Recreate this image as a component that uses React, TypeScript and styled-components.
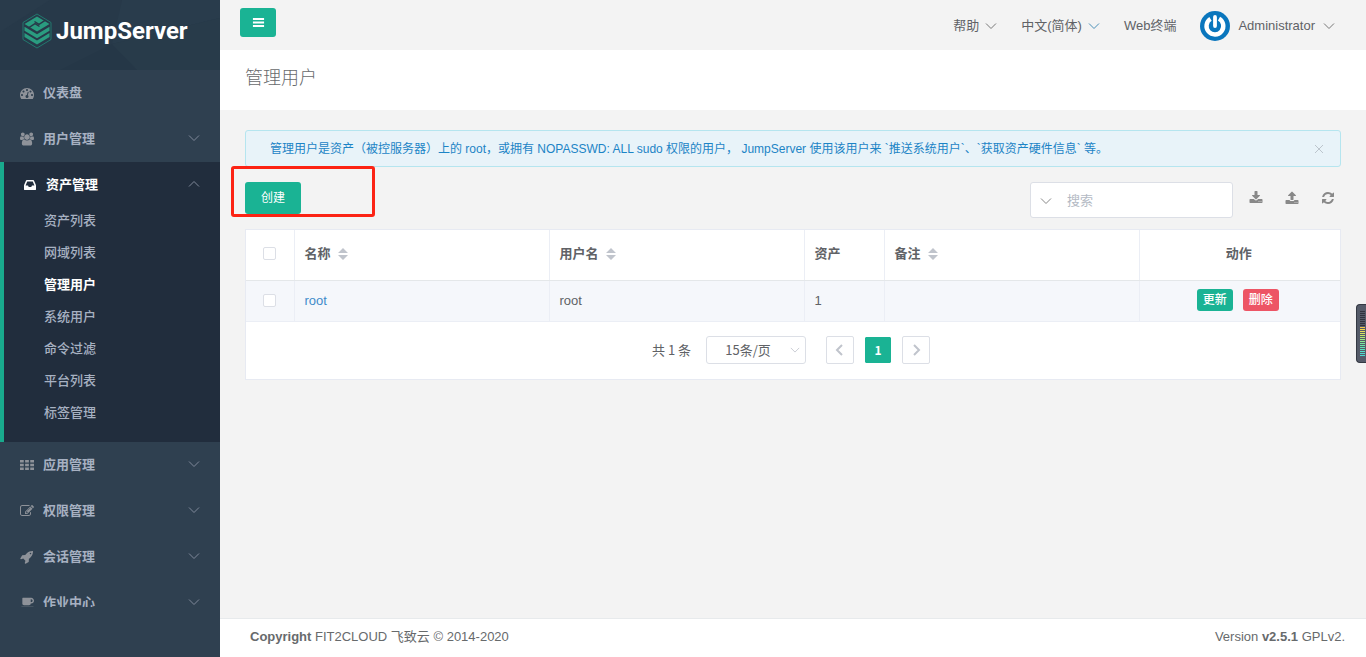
import React from 'react';
import styled, { createGlobalStyle, css } from 'styled-components';

const GREEN = '#1ab394';

const Global = createGlobalStyle`
  *, *::before, *::after { box-sizing: border-box; }
  body {
    margin: 0;
    background: #f3f3f3;
    color: #606266;
    font-family: "Liberation Sans", "Noto Sans CJK SC", sans-serif;
    font-size: 13px;
    line-height: 20px;
  }
  button, input, select { font: inherit; color: inherit; }
  button { cursor: pointer; }
  a { text-decoration: none; color: inherit; }
  ul { list-style: none; margin: 0; padding: 0; }
`;

/* ---------- icons ---------- */

const PATHS = {
  dashboard:
    'M384 1152q0-53-37.5-90.5t-90.5-37.5-90.5 37.5-37.5 90.5 37.5 90.5 90.5 37.5 90.5-37.5 37.5-90.5zm192-448q0-53-37.5-90.5t-90.5-37.5-90.5 37.5-37.5 90.5 37.5 90.5 90.5 37.5 90.5-37.5 37.5-90.5zm428 481l101-382q6-26-7.5-48.5t-38.5-29.5-48 6.5-30 39.5l-101 382q-60 5-107 43.5t-63 98.5q-20 77 20 146t117 89 146-20 89-117q16-60-6-117t-72-91zm660-33q0-53-37.5-90.5t-90.5-37.5-90.5 37.5-37.5 90.5 37.5 90.5 90.5 37.5 90.5-37.5 37.5-90.5zm-640-640q0-53-37.5-90.5t-90.5-37.5-90.5 37.5-37.5 90.5 37.5 90.5 90.5 37.5 90.5-37.5 37.5-90.5zm448 192q0-53-37.5-90.5t-90.5-37.5-90.5 37.5-37.5 90.5 37.5 90.5 90.5 37.5 90.5-37.5 37.5-90.5zm320 448q0 261-141 483-19 29-54 29h-1402q-35 0-54-29-141-221-141-483 0-182 71-348t191-286 286-191 348-71 348 71 286 191 191 286 71 348z',
  users:
    'M529 896q-162 5-265 128h-134q-82 0-138-40.5t-56-118.5q0-353 124-353 6 0 43.5 21t97.5 42.5 119 21.5q67 0 133-23-5 37-5 66 0 139 81 256zm1071 637q0 120-73 189.5t-194 69.5h-874q-121 0-194-69.5t-73-189.5q0-53 3.5-103.5t14-109 26.5-108.5 43-97.5 62-81 85.5-53.5 111.5-20q10 0 43 21.5t73 48 107 48 135 21.5 135-21.5 107-48 73-48 43-21.5q61 0 111.5 20t85.5 53.5 62 81 43 97.5 26.5 108.5 14 109 3.5 103.5zm-1024-1277q0 106-75 181t-181 75-181-75-75-181 75-181 181-75 181 75 75 181zm704 384q0 159-112.5 271.5t-271.5 112.5-271.5-112.5-112.5-271.5 112.5-271.5 271.5-112.5 271.5 112.5 112.5 271.5zm576 225q0 78-56 118.5t-138 40.5h-134q-103-123-265-128 81-117 81-256 0-29-5-66 66 23 133 23 59 0 119-21.5t97.5-42.5 43.5-21q124 0 124 353zm-128-609q0 106-75 181t-181 75-181-75-75-181 75-181 181-75 181 75 75 181z',
  inbox:
    'M1151 960h316q-1-3-2.5-8t-2.5-8l-212-496h-708l-212 496q-1 2-2.5 8t-2.5 8h316l95 192h320zm513 30v482q0 26-19 45t-45 19h-1408q-26 0-45-19t-19-45v-482q0-62 25-123l238-552q10-25 36.5-42t52.5-17h832q26 0 52.5 17t36.5 42l238 552q25 61 25 123z',
  grid:
    'M0 256h480v320h-480zM656 256h480v320h-480zM1312 256h480v320h-480zM0 736h480v320h-480zM656 736h480v320h-480zM1312 736h480v320h-480zM0 1216h480v320h-480zM656 1216h480v320h-480zM1312 1216h480v320h-480z',
  edit:
    'M888 1184l116-116-152-152-116 116v56h96v96h56zm440-720q-16-16-33 1l-350 350q-17 17-1 33t33-1l350-350q17-17 1-33zm80 594v190q0 119-84.5 203.5t-203.5 84.5h-832q-119 0-203.5-84.5t-84.5-203.5v-832q0-119 84.5-203.5t203.5-84.5h832q63 0 117 25 15 7 18 23 3 17-9 29l-49 49q-14 14-32 8-23-6-45-6h-832q-66 0-113 47t-47 113v832q0 66 47 113t113 47h832q66 0 113-47t47-113v-126q0-13 9-22l64-64q15-15 35-7t20 29zm-96-738l288 288-672 672h-288v-288zm444 132l-92 92-288-288 92-92q28-28 68-28t68 28l152 152q28 28 28 68t-28 68z',
  rocket:
    'M1440 448q0-40-28-68t-68-28-68 28-28 68 28 68 68 28 68-28 28-68zm224-288q0 249-75.5 430.5t-253.5 360.5q-81 80-195 176l-20 379q-2 16-16 26l-384 224q-7 4-16 4-12 0-23-9l-64-64q-13-14-8-32l85-276-281-281-276 85q-3 1-9 1-14 0-23-9l-64-64q-17-19-5-39l224-384q10-14 26-16l379-20q96-114 176-195 188-187 358-258t431-71q14 0 24 9.5t10 22.5z',
  coffee:
    'M1664 576q0-80-56-136t-136-56h-64v384h64q80 0 136-56t56-136zM128 1408h1664q0 106-75 181t-181 75h-1152q-106 0-181-75t-75-181zM1856 576q0 159-112.5 271.5t-271.5 112.5h-64v32q0 92-66 158t-158 66h-704q-92 0-158-66t-66-158v-736q0-26 19-45t45-19h1152q159 0 271.5 112.5t112.5 271.5z',
  download:
    'M1344 1344q0-26-19-45t-45-19-45 19-19 45 19 45 45 19 45-19 19-45zm256 0q0-26-19-45t-45-19-45 19-19 45 19 45 45 19 45-19 19-45zm128-224v320q0 40-28 68t-68 28h-1472q-40 0-68-28t-28-68v-320q0-40 28-68t68-28h465l135 136q58 56 136 56t136-56l136-136h464q40 0 68 28t28 68zm-325-569q17 41-14 70l-448 448q-18 19-45 19t-45-19l-448-448q-31-29-14-70 17-39 59-39h256v-448q0-26 19-45t45-19h256q26 0 45 19t19 45v448h256q42 0 59 39z',
  upload:
    'M1344 1472q0-26-19-45t-45-19-45 19-19 45 19 45 45 19 45-19 19-45zm256 0q0-26-19-45t-45-19-45 19-19 45 19 45 45 19 45-19 19-45zm128-224v320q0 40-28 68t-68 28h-1472q-40 0-68-28t-28-68v-320q0-40 28-68t68-28h427q21 56 70.5 92t110.5 36h256q61 0 110.5-36t70.5-92h427q40 0 68 28t28 68zm-325-648q-17 40-59 40h-256v448q0 26-19 45t-45 19h-256q-26 0-45-19t-19-45v-448h-256q-42 0-59-40-17-39 14-69l448-448q18-19 45-19t45 19l448 448q31 30 14 69z',
  refresh:
    'M1639 1056q0 5-1 7-64 268-268 434.5t-478 166.5q-146 0-282.5-55t-243.5-157l-129 129q-19 19-45 19t-45-19-19-45v-448q0-26 19-45t45-19h448q26 0 45 19t19 45-19 45l-137 137q71 66 161 102t187 36q134 0 250-65t186-179q11-17 53-117 8-23 30-23h192q13 0 22.5 9.5t9.5 22.5zm25-800v448q0 26-19 45t-45 19h-448q-26 0-45-19t-19-45 19-45l138-138q-148-137-349-137-134 0-250 65t-186 179q-11 17-53 117-8 23-30 23h-199q-13 0-22.5-9.5t-9.5-22.5v-7q65-268 270-434.5t480-166.5q146 0 284 55.5t245 156.5l130-129q19-19 45-19t45 19 19 45z',
  bars:
    'M128 288h1536v256h-1536zM128 768h1536v256h-1536zM128 1248h1536v256h-1536z',
};

type IconName = keyof typeof PATHS;

const Icon = ({ name, size = 14 }: { name: IconName; size?: number }) => (
  <svg
    width={size}
    height={size}
    viewBox={name === 'users' || name === 'coffee' ? '-64 0 1920 1792' : '0 0 1792 1792'}
    fill="currentColor"
    aria-hidden="true"
  >
    <path d={PATHS[name]} />
  </svg>
);

const DIRS = {
  down: 'M1 3.5L6 8.5L11 3.5',
  up: 'M1 8.5L6 3.5L11 8.5',
  left: 'M8 1L3 6L8 11',
  right: 'M4 1L9 6L4 11',
};

const Chevron = ({ dir, size = 12, weight = 1 }: { dir: keyof typeof DIRS; size?: number; weight?: number }) => (
  <svg width={size} height={size} viewBox="0 0 12 12" fill="none" stroke="currentColor" strokeWidth={weight} aria-hidden="true">
    <path d={DIRS[dir]} />
  </svg>
);

const LogoMark = () => (
  <svg width="30" height="36" viewBox="0 0 30 36" fill="none" aria-hidden="true">
    <path d="M15 1L29 9.500V26.500L15 35L1 26.500V9.500Z" stroke="#22786e" strokeWidth="1" />
    <path d="M15 3.500L27.500 11L15 18.500L2.500 11Z" fill="#2a9c80" />
    <path d="M6.500 14.800L13 10.700L17.500 13.500M23.500 7.200L17 11.300L12.500 8.500" stroke="#273949" strokeWidth="1.400" />
    <path d="M2.500 13.700L15 21.200L27.500 13.700V17.700L15 25.200L2.500 17.700Z" fill="#2a9c80" />
    <path d="M2.500 20L15 27.500L27.500 20V24L15 31.500L2.500 24Z" fill="#2a9c80" />
  </svg>
);

const Avatar = () => (
  <svg width="30" height="30" viewBox="0 0 30 30" fill="none" aria-hidden="true">
    <circle cx="15" cy="15" r="15" fill="#0a76bd" />
    <path d="M10.500 7.900A8.400 8.400 0 1 0 19 7.700" stroke="#fff" strokeWidth="4.400" />
    <path d="M15 6V15" stroke="#fff" strokeWidth="3.800" strokeLinecap="round" />
  </svg>
);

const Facets = () => (
  <svg width="220" height="70" viewBox="0 0 220 70" preserveAspectRatio="none" aria-hidden="true">
    <path d="M0 0H50L0 32Z" fill="#293b4b" />
    <path d="M122 0H220V18L112 44Z" fill="#293c4c" />
    <path d="M112 44L137 70H60Z" fill="#253747" />
    <path d="M112 44L220 18V70H137Z" fill="#283b4a" />
  </svg>
);

/* ---------- shell ---------- */

const Shell = styled.div`
  display: flex;
  min-height: 100vh;
`;

const Sidebar = styled.aside`
  flex: 0 0 220px;
  background: #2f4050;
`;

const SidebarScroll = styled.div`
  height: calc(100vh - 50px);
  overflow: hidden;
`;

const Brand = styled.a`
  position: relative;
  display: flex;
  align-items: center;
  gap: 4px;
  height: 70px;
  padding: 0 0 8px 22px;
  background: #273949;
  > svg:first-child { position: absolute; inset: 0; }
  > svg { position: relative; }
`;

const BrandName = styled.span`
  position: relative;
  color: #fff;
  font: bold 24px/32px Roboto, sans-serif;
`;

const Group = styled.li<{ $open?: boolean }>`
  ${p => p.$open && css`
    background: #212d3d;
    border-left: 4px solid #19aa8d;
    padding-bottom: 10px;
  `}
`;

const GroupLink = styled.a<{ $open?: boolean }>`
  display: flex;
  align-items: center;
  height: 46px;
  padding: 0 20px 0 ${p => (p.$open ? 19 : 20)}px;
  font-weight: bold;
  color: ${p => (p.$open ? '#fff' : '#a7b1c2')};
  > svg { color: ${p => (p.$open ? '#fff' : '#8e9299')}; }
  > svg:last-child:not(:first-child) { color: #80899a; margin-bottom: 3px; }
  > span { flex: 1; margin-left: 9px; }
`;

const SubLink = styled.a<{ $active?: boolean }>`
  display: block;
  padding: 3px 0 9px 40px;
  height: 32px;
  font-weight: ${p => (p.$active ? 'bold' : '500')};
  color: ${p => (p.$active ? '#fff' : '#a7b1c2')};
`;

const Main = styled.div`
  flex: 1;
  min-width: 0;
  display: flex;
  flex-direction: column;
`;

const TopBar = styled.header`
  display: flex;
  justify-content: space-between;
  height: 50px;
  padding: 8px 31px 0 20px;
`;

const MenuToggle = styled.button`
  display: flex;
  align-items: center;
  justify-content: center;
  width: 36px;
  height: 29px;
  padding: 0;
  border: 0;
  border-radius: 3px;
  background: ${GREEN};
  color: #fff;
`;

const TopNav = styled.nav`
  display: flex;
  align-items: center;
  gap: 24px;
  height: 35px;
`;

const TopLink = styled.a<{ $wide?: boolean; $tint?: string }>`
  display: flex;
  align-items: center;
  gap: ${p => (p.$wide ? 8 : 6)}px;
  > svg:last-child { color: ${p => p.$tint ?? '#777'}; }
`;

const TitleBar = styled.div`
  height: 60px;
  padding: 13px 25px;
  background: #fff;
`;

const Title = styled.h1`
  margin: 0;
  font-size: 18px;
  line-height: 30px;
  font-weight: 300;
  color: #676a6c;
`;

const Content = styled.main`
  flex: 1;
  padding: 20px 25px;
`;

const Alert = styled.div`
  display: flex;
  align-items: center;
  justify-content: space-between;
  height: 37px;
  padding: 0 16px 0 24px;
  border: 1px solid #b5e5ef;
  border-radius: 3px;
  background: #e8f3f9;
  color: #1c84c6;
  font-size: 12px;
`;

const AlertClose = styled.button`
  display: flex;
  padding: 0;
  border: 0;
  background: none;
  color: #bcc5cd;
`;

const Toolbar = styled.div`
  display: flex;
  justify-content: space-between;
  padding: 15px 0 11px;
`;

const CreateArea = styled.div`
  position: relative;
`;

const Marker = styled.div`
  position: absolute;
  left: -14px;
  top: -16px;
  width: 144px;
  height: 51px;
  border: 3px solid #fc2314;
  border-radius: 3px;
  pointer-events: none;
`;

const CreateButton = styled.button`
  width: 56px;
  height: 32px;
  padding: 0;
  border: 0;
  border-radius: 3px;
  background: ${GREEN};
  color: #fff;
  font-size: 12px;
`;

const Tools = styled.div`
  display: flex;
  align-items: flex-start;
  gap: 16px;
`;

const SearchBox = styled.label`
  display: flex;
  align-items: center;
  gap: 15px;
  width: 203px;
  height: 36px;
  padding: 1px 9px 0;
  border: 1px solid #dcdfe6;
  border-radius: 3px;
  background: #fff;
  color: #888;
`;

const SearchInput = styled.input`
  flex: 1;
  min-width: 0;
  padding: 0;
  border: 0;
  outline: 0;
  background: transparent;
  &::placeholder { color: #b4bac4; opacity: 1; }
`;

const ToolButton = styled.button`
  display: flex;
  width: 14px;
  padding: 0;
  margin-top: 9px;
  border: 0;
  background: none;
  color: #888;
`;

const ToolGroup = styled.div`
  display: flex;
  gap: 22px;
  padding-right: 6px;
`;

const Card = styled.section`
  background: #fff;
  border: 1px solid #e7eaf2;
`;

const Table = styled.table`
  width: 100%;
  table-layout: fixed;
  border-collapse: collapse;
  border-bottom: 1px solid #ebeef5;
`;

const HeadCell = styled.th<{ $center?: boolean }>`
  height: 50px;
  padding: 0 ${p => (p.$center ? 12 : 10)}px 2px 10px;
  text-align: ${p => (p.$center ? 'center' : 'left')};
  border-bottom: 1px solid #e4e7e9;
  & + & { border-left: 1px solid #ebeef5; }
`;

const Cell = styled.td<{ $center?: boolean }>`
  height: 41px;
  padding: 0 ${p => (p.$center ? 14 : 10)}px 0 10px;
  background: #f5f7fb;
  text-align: ${p => (p.$center ? 'center' : 'left')};
  & + & { border-left: 1px solid #ebeef5; }
`;

const HeadLabel = styled.span`
  display: inline-flex;
  align-items: center;
  gap: 7px;
`;

const Check = styled.input`
  appearance: none;
  display: block;
  width: 13px;
  height: 13px;
  margin: 0 auto;
  border: 1px solid #dcdfe6;
  border-radius: 2px;
  background: #fff;
`;

const RowLink = styled.a`
  color: #428bca;
`;

const Action = styled.button<{ $danger?: boolean }>`
  width: 36px;
  height: 22px;
  padding: 0;
  margin: 0 5px 1px;
  border: 0;
  border-radius: 3px;
  background: ${p => (p.$danger ? '#ed5565' : GREEN)};
  color: #fff;
  font-size: 12px;
  font-weight: 500;
  vertical-align: middle;
`;

const Pager = styled.div`
  display: flex;
  align-items: center;
  justify-content: center;
  height: 57px;
  padding-right: 4px;
  font-family: "Noto Sans CJK SC", sans-serif;
`;

const PageSize = styled.div`
  position: relative;
  margin: 0 20px 0 15px;
  > svg { position: absolute; right: 6px; top: 9px; color: #c0c4cc; pointer-events: none; }
`;

const SizeSelect = styled.select`
  appearance: none;
  display: block;
  width: 100px;
  height: 28px;
  padding: 0 16px 0 0;
  border: 1px solid #dcdfe6;
  border-radius: 3px;
  background: #fff;
  text-align: center;
  text-align-last: center;
`;

const PageButton = styled.button<{ $current?: boolean }>`
  display: flex;
  align-items: center;
  justify-content: center;
  width: 28px;
  height: 28px;
  padding: 0;
  margin-right: 10px;
  border: 1px solid ${p => (p.$current ? '#fff' : '#dcdfe6')};
  border-radius: 2px;
  background: ${p => (p.$current ? GREEN : '#fff')};
  background-clip: padding-box;
  color: ${p => (p.$current ? '#fff' : '#c0c4cc')};
  font-size: 12px;
  font-weight: bold;
  &:last-child { margin-right: 0; }
`;

const Footer = styled.footer`
  display: flex;
  justify-content: space-between;
  height: 39px;
  padding: 8px 21px 0 30px;
  border-top: 1px solid #e7eaec;
  background: #fff;
  color: #676a6c;
  font-size: 13px;
`;

const Gauge = styled.div`
  position: fixed;
  right: 0;
  top: 304px;
  width: 10px;
  height: 59px;
  padding: 6px 1px 6px 3px;
  border: 1px solid #343943;
  border-right: 0;
  border-radius: 4px 0 0 4px;
  background: #555b69;
`;

const GaugeBars = styled.div`
  display: flex;
  flex-direction: column;
  gap: 1px;
`;

const GaugeBar = styled.i<{ $color: string }>`
  height: 1px;
  background: ${p => p.$color};
`;

/* ---------- data ---------- */

const GROUPS_TOP: { icon: IconName; label: string; leaf?: boolean }[] = [
  { icon: 'dashboard', label: '仪表盘', leaf: true },
  { icon: 'users', label: '用户管理' },
];

const ASSET_ITEMS = ['资产列表', '网域列表', '管理用户', '系统用户', '命令过滤', '平台列表', '标签管理'];

const GROUPS_BOTTOM: { icon: IconName; label: string }[] = [
  { icon: 'grid', label: '应用管理' },
  { icon: 'edit', label: '权限管理' },
  { icon: 'rocket', label: '会话管理' },
  { icon: 'coffee', label: '作业中心' },
];

const GAUGE = [
  ...Array(8).fill('#30343d'),
  '#f2c94c', '#f2d84c', '#e6e05a', '#d4e560', '#c2e868', '#aee976', '#9cea84', '#8aea92', '#7ae89e', '#6ce6aa', '#62e4b4', '#5ae2be', '#54e0c8', '#50dccc', '#4cdad0',
];

const NavGroup = ({ icon, label, leaf }: { icon: IconName; label: string; leaf?: boolean }) => (
  <Group>
    <GroupLink href="#">
      <Icon name={icon} />
      <span>{label}</span>
      {!leaf && <Chevron dir="down" />}
    </GroupLink>
  </Group>
);

const Sort = () => (
  <svg width="10" height="12" viewBox="0 0 10 12" fill="#c0c4cc" aria-hidden="true">
    <path d="M5 0L10 5H0ZM5 12L10 7H0Z" />
  </svg>
);

export default function App() {
  return (
    <>
      <Global />
      <Shell>
        <Sidebar>
          <SidebarScroll>
            <Brand href="#">
              <Facets />
              <LogoMark />
              <BrandName>JumpServer</BrandName>
            </Brand>
            <ul>
              {GROUPS_TOP.map(g => <NavGroup key={g.label} {...g} />)}
              <Group $open>
                <GroupLink href="#" $open>
                  <Icon name="inbox" />
                  <span>资产管理</span>
                  <Chevron dir="up" />
                </GroupLink>
                <ul>
                  {ASSET_ITEMS.map(label => (
                    <li key={label}>
                      <SubLink href="#" $active={label === '管理用户'}>{label}</SubLink>
                    </li>
                  ))}
                </ul>
              </Group>
              {GROUPS_BOTTOM.map(g => <NavGroup key={g.label} {...g} />)}
            </ul>
          </SidebarScroll>
        </Sidebar>
        <Main>
          <TopBar>
            <MenuToggle aria-label="菜单"><Icon name="bars" size={13} /></MenuToggle>
            <TopNav>
              <TopLink href="#">帮助<Chevron dir="down" /></TopLink>
              <TopLink href="#" $tint="#4a90b8">中文(简体)<Chevron dir="down" /></TopLink>
              <TopLink href="#">Web终端</TopLink>
              <TopLink href="#" $wide><Avatar />Administrator<Chevron dir="down" /></TopLink>
            </TopNav>
          </TopBar>
          <TitleBar><Title>管理用户</Title></TitleBar>
          <Content>
            <Alert role="alert">
              <span>管理用户是资产（被控服务器）上的 root，或拥有 NOPASSWD: ALL sudo 权限的用户， JumpServer 使用该用户来 `推送系统用户`、`获取资产硬件信息` 等。</span>
              <AlertClose aria-label="关闭">
                <svg width="10" height="10" viewBox="0 0 10 10" stroke="currentColor" fill="none"><path d="M1 1L9 9M9 1L1 9" /></svg>
              </AlertClose>
            </Alert>
            <Toolbar>
              <CreateArea>
                <CreateButton>创建</CreateButton>
                <Marker />
              </CreateArea>
              <Tools>
                <SearchBox>
                  <Chevron dir="down" />
                  <SearchInput type="text" placeholder="搜索" aria-label="搜索" />
                </SearchBox>
                <ToolGroup>
                  <ToolButton aria-label="导出"><Icon name="download" /></ToolButton>
                  <ToolButton aria-label="导入"><Icon name="upload" /></ToolButton>
                  <ToolButton aria-label="刷新"><Icon name="refresh" /></ToolButton>
                </ToolGroup>
              </Tools>
            </Toolbar>
            <Card>
              <Table>
                <colgroup>
                  <col width="48" />
                  <col />
                  <col />
                  <col width="80" />
                  <col />
                  <col width="201" />
                </colgroup>
                <thead>
                  <tr>
                    <HeadCell><Check type="checkbox" aria-label="全选" /></HeadCell>
                    <HeadCell><HeadLabel>名称<Sort /></HeadLabel></HeadCell>
                    <HeadCell><HeadLabel>用户名<Sort /></HeadLabel></HeadCell>
                    <HeadCell>资产</HeadCell>
                    <HeadCell><HeadLabel>备注<Sort /></HeadLabel></HeadCell>
                    <HeadCell $center>动作</HeadCell>
                  </tr>
                </thead>
                <tbody>
                  <tr>
                    <Cell><Check type="checkbox" aria-label="root" /></Cell>
                    <Cell><RowLink href="#">root</RowLink></Cell>
                    <Cell>root</Cell>
                    <Cell>1</Cell>
                    <Cell />
                    <Cell $center>
                      <Action>更新</Action>
                      <Action $danger>删除</Action>
                    </Cell>
                  </tr>
                </tbody>
              </Table>
              <Pager>
                <span>共 1 条</span>
                <PageSize>
                  <SizeSelect aria-label="每页条数"><option>15条/页</option></SizeSelect>
                  <Chevron dir="down" size={10} />
                </PageSize>
                <PageButton aria-label="上一页"><Chevron dir="left" weight={2} /></PageButton>
                <PageButton $current>1</PageButton>
                <PageButton aria-label="下一页"><Chevron dir="right" weight={2} /></PageButton>
              </Pager>
            </Card>
          </Content>
          <Footer>
            <span><strong>Copyright</strong> FIT2CLOUD 飞致云 © 2014-2020</span>
            <span>Version <strong>v2.5.1</strong> GPLv2.</span>
          </Footer>
        </Main>
      </Shell>
      <Gauge>
        <GaugeBars>
          {GAUGE.map((c, i) => <GaugeBar key={i} $color={c} />)}
        </GaugeBars>
      </Gauge>
    </>
  );
}
